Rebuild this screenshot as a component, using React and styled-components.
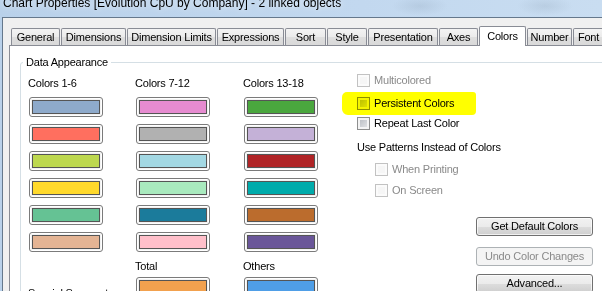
import React from 'react'
import styled, { createGlobalStyle } from 'styled-components'

const GlobalStyle = createGlobalStyle`
  html, body {
    margin: 0;
    padding: 0;
    background: #bcd4ec;
  }
  body {
    font-family: "Liberation Sans", Arial, sans-serif;
    font-size: 11px;
    color: #000;
  }
`;

const Window = styled.div`
  width: 602px;
  height: 291px;
  overflow: hidden;
  display: flex;
  flex-direction: column;
  background:
    radial-gradient(ellipse 40px 14px at 420px 6px, rgba(120,140,160,0.18), transparent 70%),
    radial-gradient(ellipse 40px 14px at 545px 6px, rgba(120,140,160,0.18), transparent 70%),
    linear-gradient(90deg, #b9d1ea 0%, #c2d8ef 60%, #c9ddf1 100%);
`;

const TitleBar = styled.div`
  height: 17px;
  flex: none;
  padding-left: 3px;
  overflow: hidden;
`;

const TitleText = styled.div`
  margin-top: -4px;
  font-size: 12px;
  line-height: 14px;
  color: #000;
  white-space: nowrap;
  text-shadow: 0 0 6px rgba(255, 255, 255, 0.9);
`;

const Body = styled.div`
  flex: 1;
  display: flex;
  flex-direction: column;
  margin-left: 2px;
  border-top: 1px solid #65788c;
  border-left: 1px solid #65788c;
  background: #f0f0f0;
  padding-left: 6px;
  min-height: 0;
`;

const TabBar = styled.div`
  height: 27px;
  flex: none;
  display: flex;
  align-items: flex-end;
  padding-left: 2px;
  position: relative;
  z-index: 1;
`;

const Tab = styled.div`
  flex: none;
  width: ${p => p.$w}px;
  box-sizing: border-box;
  height: ${p => (p.$active ? 20 : 17)}px;
  margin-bottom: ${p => (p.$active ? -1 : 0)}px;
  margin-right: 1px;
  border: 1px solid #898c95;
  border-bottom: none;
  border-radius: 2px 2px 0 0;
  background: ${p => (p.$active ? '#fff' : 'linear-gradient(#f3f3f3, #ebebeb 50%, #dedede 51%, #d9d9d9)')};
  display: flex;
  align-items: center;
  justify-content: center;
  padding-top: ${p => (p.$active ? 0 : 1)}px;
  line-height: 13px;
  white-space: nowrap;
  letter-spacing: -0.2px;
`;

const Pane = styled.div`
  flex: 1;
  width: 800px;
  background: #fff;
  border: 1px solid #898c95;
  padding-left: 10px;
`;

const Group = styled.fieldset`
  margin: 10px 0 0 0;
  width: 760px;
  border: 1px solid #d5dfe5;
  border-radius: 3px;
  padding: 8px 0 20px 7px;
`;

const Legend = styled.legend`
  margin-left: -5px;
  padding: 0 3px;
  line-height: 13px;
  letter-spacing: -0.2px;
`;

const Grid = styled.div`
  display: grid;
  grid-template-columns: 107px 108px 114px 300px;
  align-items: start;
`;

const Column = styled.div`
  display: flex;
  flex-direction: column;
`;

const Label = styled.div`
  line-height: 13px;
  letter-spacing: -0.2px;
  white-space: nowrap;
  margin-top: ${p => p.$mt || 0}px;
  margin-bottom: ${p => p.$mb || 0}px;
`;

const SwatchList = styled.div`
  display: flex;
  flex-direction: column;
  gap: 7px;
  margin-top: 7px;
`;

const Swatch = styled.div`
  width: 74px;
  height: 20px;
  box-sizing: border-box;
  margin-left: 1px;
  border: 1px solid #7b7b7b;
  border-radius: 3px;
  background: #f2f2f2;
  box-shadow: inset 0 0 0 1px #fff;
  padding: 2px;
  display: flex;
`;

const SwatchFill = styled.div`
  flex: 1;
  border: 1px solid #555;
  background: ${p => p.$color};
`;

const RightCol = styled.div`
  display: flex;
  flex-direction: column;
  align-items: flex-start;
  margin-top: -3px;
`;

const CheckRow = styled.div`
  position: relative;
  display: flex;
  align-items: center;
  gap: 4px;
  height: 13px;
  margin-top: ${p => p.$mt || 0}px;
  margin-left: ${p => p.$indent || 0}px;
  color: ${p => (p.$disabled ? '#8a8a8a' : '#000')};
  line-height: 13px;
  letter-spacing: -0.2px;
  white-space: nowrap;
`;

const Box = styled.span`
  width: 13px;
  height: 13px;
  box-sizing: border-box;
  flex: none;
  border: 1px solid ${p => (p.$disabled ? '#c2c2c2' : '#8e8f8f')};
  background: ${p => (p.$disabled ? '#f6f6f6' : 'linear-gradient(135deg, #b4b8be, #e9eaec)')};
  box-shadow: inset 0 0 0 2px ${p => (p.$disabled ? '#fbfbfb' : '#f4f4f4')};
`;

const Highlight = styled.span`
  position: absolute;
  left: -15px;
  right: -22px;
  top: -5px;
  bottom: -5px;
  background: #ffff00;
  border-radius: 5px 3px 4px 6px;
  mix-blend-mode: multiply;
  filter: blur(0.5px);
`;

const Heading = styled.div`
  margin-top: 11px;
  line-height: 13px;
  letter-spacing: -0.2px;
  white-space: nowrap;
`;

const Button = styled.div`
  width: 117px;
  height: 19px;
  box-sizing: border-box;
  margin-left: 119px;
  margin-top: ${p => p.$mt}px;
  border: 1px solid ${p => (p.$disabled ? '#adb2b5' : '#707070')};
  border-radius: 3px;
  background: ${p => (p.$disabled ? '#f4f4f4' : 'linear-gradient(#f2f2f2, #ebebeb 50%, #dddddd 51%, #cfcfcf)')};
  box-shadow: inset 0 0 0 1px ${p => (p.$disabled ? '#f4f4f4' : 'rgba(255,255,255,0.7)')};
  color: ${p => (p.$disabled ? '#8a8a8a' : '#000')};
  display: flex;
  align-items: center;
  justify-content: center;
  line-height: 13px;
  letter-spacing: -0.2px;
  white-space: nowrap;
`;

const tabs = [
  ['General', 49],
  ['Dimensions', 65],
  ['Dimension Limits', 89],
  ['Expressions', 67],
  ['Sort', 41],
  ['Style', 40],
  ['Presentation', 70],
  ['Axes', 39],
  ['Colors', 47, true],
  ['Number', 45],
  ['Font', 31],
];

const columns = [
  {
    title: 'Colors 1-6',
    colors: ['#8eaacb', '#ff6f5f', '#bdd84f', '#ffd92c', '#65c294', '#e4b494'],
  },
  {
    title: 'Colors 7-12',
    colors: ['#e68bd0', '#b1b1b1', '#a3d8e3', '#a9eabe', '#1b7b9b', '#ffbfca'],
    extra: { title: 'Total', color: '#f2a14e' },
  },
  {
    title: 'Colors 13-18',
    colors: ['#4aa73e', '#c4b1d7', '#b02426', '#00abab', '#bb6c2d', '#6a5699'],
    extra: { title: 'Others', color: '#4f9ee7' },
  },
];

const App = () => {
  return (
    <Window>
      <GlobalStyle />
      <TitleBar>
        <TitleText>Chart Properties [Evolution CpU by Company] - 2 linked objects</TitleText>
      </TitleBar>
      <Body>
        <TabBar>
          {tabs.map(([name, w, active]) => (
            <Tab key={name} $w={w} $active={active}>{name}</Tab>
          ))}
        </TabBar>
        <Pane>
          <Group>
            <Legend>Data Appearance</Legend>
            <Grid>
              {columns.map(col => (
                <Column key={col.title}>
                  <Label>{col.title}</Label>
                  <SwatchList>
                    {col.colors.map(c => (
                      <Swatch key={c}><SwatchFill $color={c} /></Swatch>
                    ))}
                  </SwatchList>
                  {col.extra ? (
                    <>
                      <Label $mt={8} $mb={4}>{col.extra.title}</Label>
                      <Swatch><SwatchFill $color={col.extra.color} /></Swatch>
                    </>
                  ) : (
                    <Label $mt={35}>Special Segments</Label>
                  )}
                </Column>
              ))}
              <RightCol>
                <CheckRow $disabled>
                  <Box $disabled />
                  Multicolored
                </CheckRow>
                <CheckRow $mt={10}>
                  <Box />
                  Persistent Colors
                  <Highlight />
                </CheckRow>
                <CheckRow $mt={7}>
                  <Box />
                  Repeat Last Color
                </CheckRow>
                <Heading>Use Patterns Instead of Colors</Heading>
                <CheckRow $mt={9} $indent={18} $disabled>
                  <Box $disabled />
                  When Printing
                </CheckRow>
                <CheckRow $mt={8} $indent={18} $disabled>
                  <Box $disabled />
                  On Screen
                </CheckRow>
                <Button $mt={20}>Get Default Colors</Button>
                <Button $mt={11} $disabled>Undo Color Changes</Button>
                <Button $mt={8}>Advanced...</Button>
              </RightCol>
            </Grid>
          </Group>
        </Pane>
      </Body>
    </Window>
  );
};

export default App;
